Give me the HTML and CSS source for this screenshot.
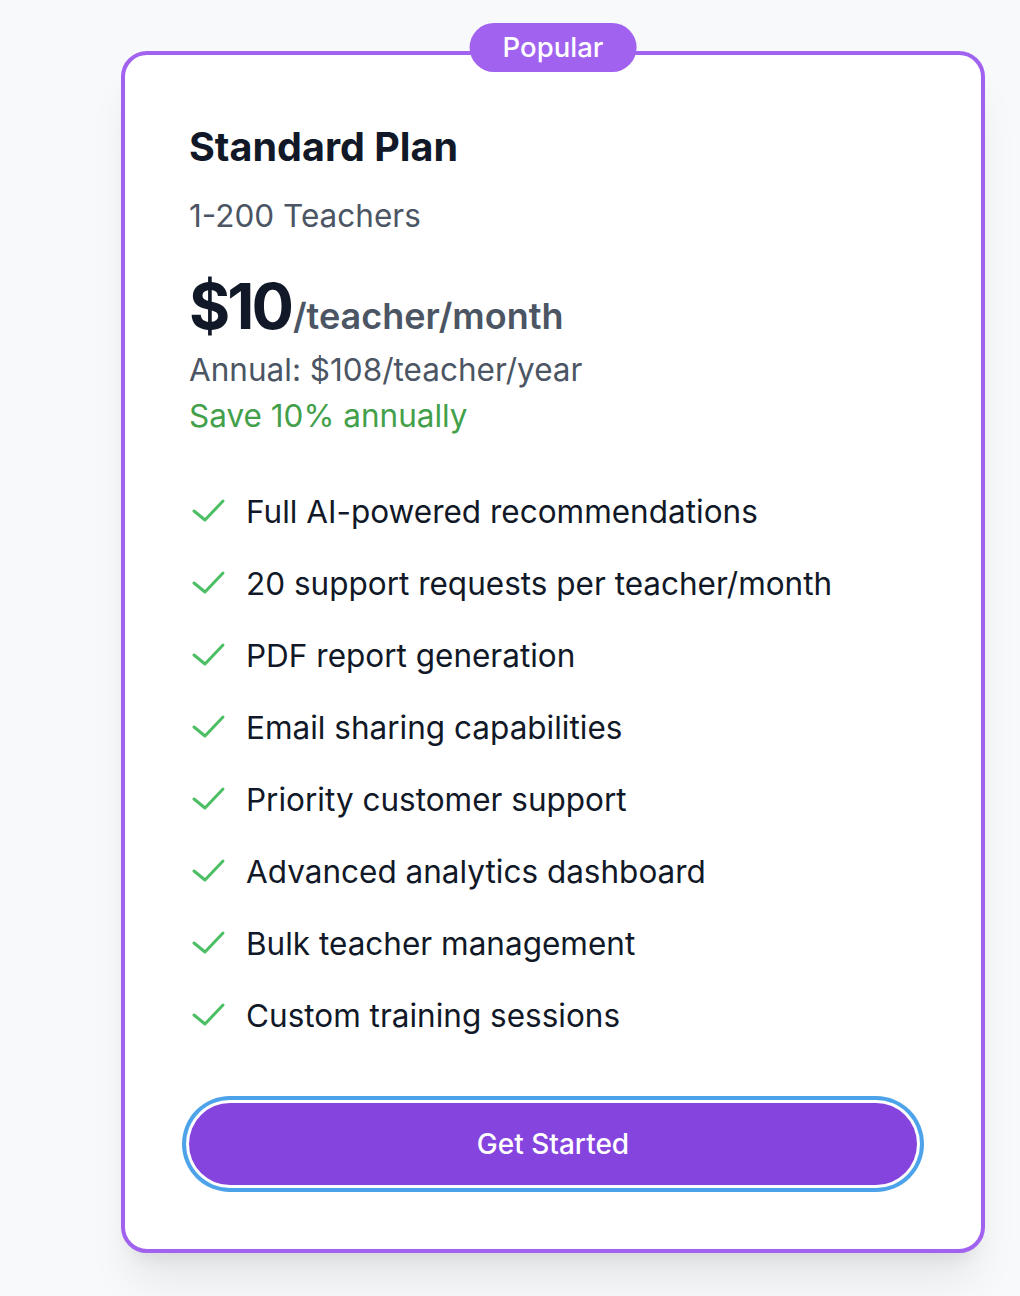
FILE: index.html
```html
<!DOCTYPE html>
<html lang="en">
<head>
<meta charset="utf-8">
<title>Standard Plan</title>
<link rel="stylesheet" href="styles.css">
</head>
<body>
<main class="page">
  <section class="card">
    <span class="badge">Popular</span>
    <h2 class="title">Standard Plan</h2>
    <p class="subtitle">1-200 Teachers</p>
    <div class="price"><span class="amount">$10</span><span class="unit">/teacher/month</span></div>
    <p class="annual">Annual: $108/teacher/year</p>
    <p class="save">Save 10% annually</p>
    <ul class="features">
      <li><svg class="check" viewBox="0 0 35 26" aria-hidden="true"><polyline points="3,13 14,22 32,3"/></svg><span>Full AI-powered recommendations</span></li>
      <li><svg class="check" viewBox="0 0 35 26" aria-hidden="true"><polyline points="3,13 14,22 32,3"/></svg><span>20 support requests per teacher/month</span></li>
      <li><svg class="check" viewBox="0 0 35 26" aria-hidden="true"><polyline points="3,13 14,22 32,3"/></svg><span>PDF report generation</span></li>
      <li><svg class="check" viewBox="0 0 35 26" aria-hidden="true"><polyline points="3,13 14,22 32,3"/></svg><span>Email sharing capabilities</span></li>
      <li><svg class="check" viewBox="0 0 35 26" aria-hidden="true"><polyline points="3,13 14,22 32,3"/></svg><span>Priority customer support</span></li>
      <li><svg class="check" viewBox="0 0 35 26" aria-hidden="true"><polyline points="3,13 14,22 32,3"/></svg><span>Advanced analytics dashboard</span></li>
      <li><svg class="check" viewBox="0 0 35 26" aria-hidden="true"><polyline points="3,13 14,22 32,3"/></svg><span>Bulk teacher management</span></li>
      <li><svg class="check" viewBox="0 0 35 26" aria-hidden="true"><polyline points="3,13 14,22 32,3"/></svg><span>Custom training sessions</span></li>
    </ul>
    <button class="cta" type="button">Get Started</button>
  </section>
</main>
</body>
</html>
```
FILE: styles.css
```css
* { box-sizing: border-box; }
html, body { margin: 0; padding: 0; }
body {
  background: #f8f9fb;
  font-family: Inter, "Noto Sans", "Liberation Sans", sans-serif;
  color: #111827;
  height: 1296px;
  overflow: hidden;
}
.page {
  padding: 51px 0 0 121px;
}
.card {
  position: relative;
  width: 864px;
  background: #fff;
  border: 4px solid #a163ef;
  border-radius: 26px;
  padding: 64px 64px 64px;
  box-shadow: 0 35px 44px -9px rgba(0,0,0,0.08), 0 14px 18px -10px rgba(0,0,0,0.08);
}
.badge {
  position: absolute;
  top: -32px;
  left: 50%;
  transform: translateX(-50%);
  height: 49px;
  line-height: 49px;
  padding: 0 33px;
  border-radius: 25px;
  background: #a163ef;
  color: #fff;
  font-size: 27.5px;
  font-weight: 500;
  white-space: nowrap;
}
.title {
  margin: 0;
  font-size: 39.5px;
  line-height: 56px;
  font-weight: 700;
  color: #111827;
}
.subtitle {
  margin: 20px 0 0;
  font-size: 31.5px;
  line-height: 42px;
  color: #4b5563;
}
.price {
  margin-top: 38px;
  line-height: 62px;
  white-space: nowrap;
}
.amount {
  font-size: 63px;
  font-weight: 700;
  color: #111827;
  letter-spacing: -3px;
}
.unit {
  font-size: 36px;
  font-weight: 600;
  color: #4b5563;
  margin-left: 2px;
}
.annual {
  margin: -2px 0 0;
  font-size: 31.5px;
  line-height: 36px;
  color: #4b5563;
}
.save {
  margin: 10px 0 0;
  font-size: 31.5px;
  line-height: 36px;
  color: #43a04a;
}
.features {
  list-style: none;
  margin: 53px 0 0;
  padding: 0;
  display: flex;
  flex-direction: column;
  gap: 24px;
}
.features li {
  display: flex;
  align-items: center;
  gap: 20px;
  height: 48px;
  font-size: 31.5px;
  color: #111827;
}
.check {
  width: 35px;
  height: 26px;
  flex: none;
  margin-left: 2px;
  fill: none;
  stroke: #4cbe63;
  stroke-width: 3;
  stroke-linecap: round;
  stroke-linejoin: round;
}
.cta {
  display: block;
  width: 100%;
  height: 82px;
  margin-top: 64px;
  border: none;
  border-radius: 41px;
  background: #8644df;
  color: #fff;
  font-family: inherit;
  font-size: 28px;
  font-weight: 500;
  box-shadow: 0 0 0 3px #fff, 0 0 0 7px #4da3ea;
  cursor: pointer;
}
```
